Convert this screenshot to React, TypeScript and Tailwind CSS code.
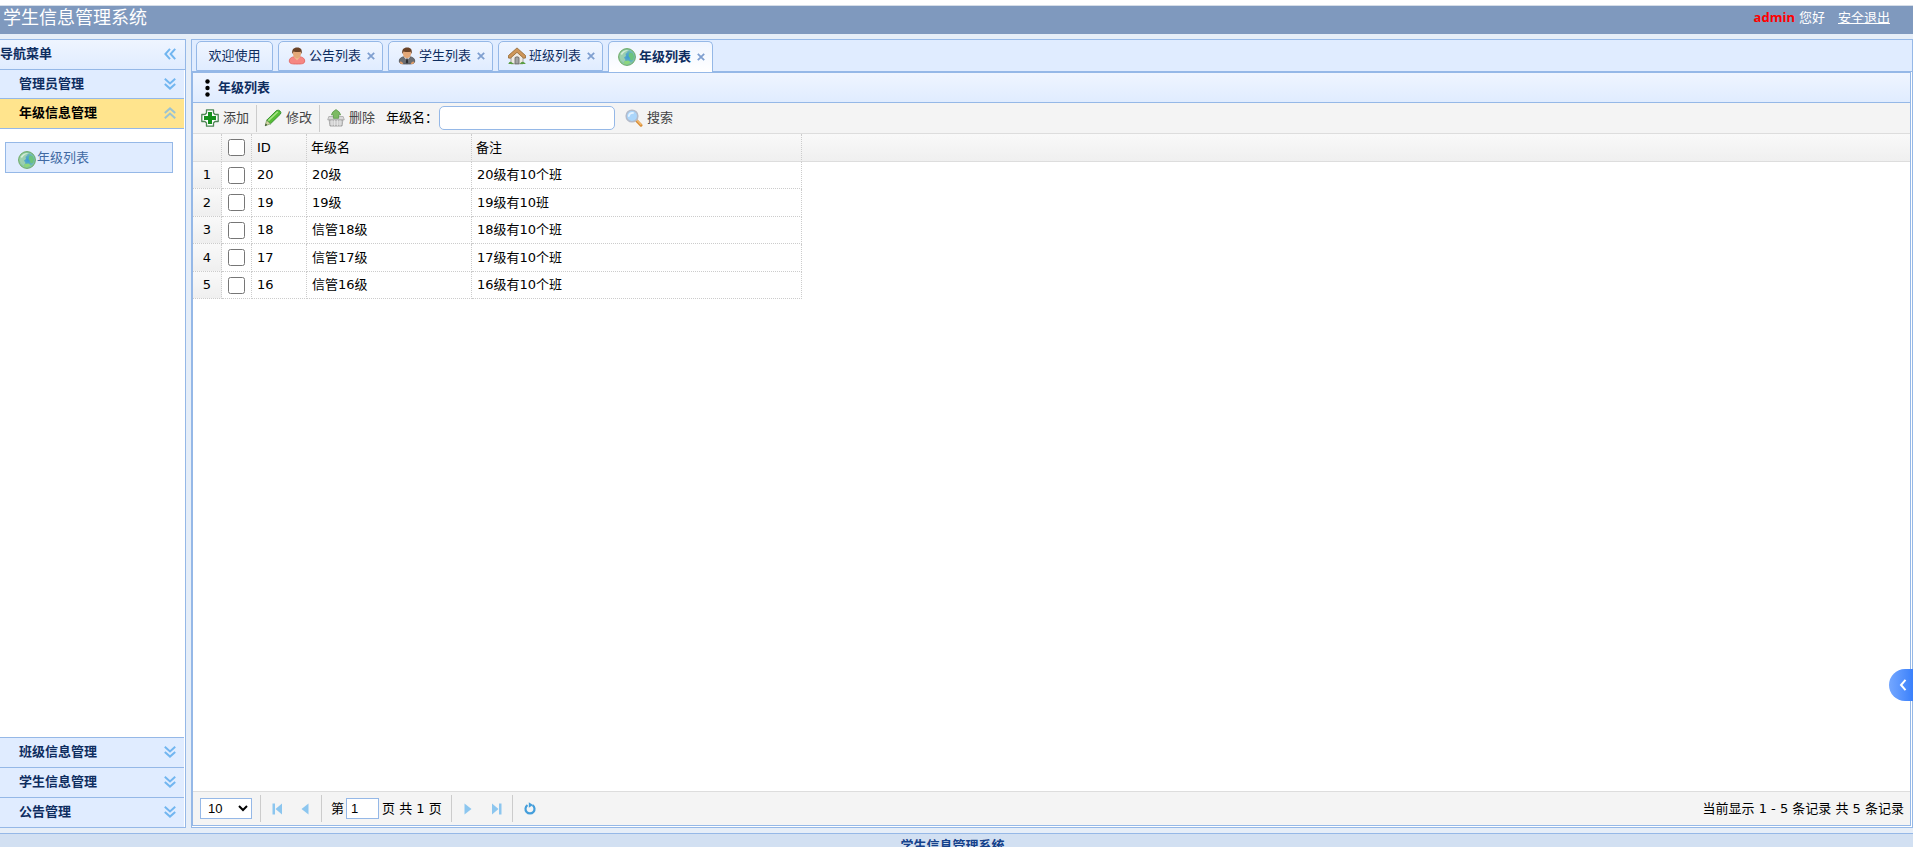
import type { ReactNode } from "react";

type IconProps = { className?: string };

const Chevrons = ({ className = "" }: IconProps) => (
  <svg viewBox="0 0 12 12" className={"size-3 shrink-0 " + className} fill="none" stroke="#72b6f0" strokeWidth="2" aria-hidden="true">
    <path d="M.8 .8 6 5.4 11.2 .8M.8 6 6 10.6 11.2 6" />
  </svg>
);

const Globe = () => (
  <svg viewBox="0 0 18 18" className="size-[18px] shrink-0" aria-hidden="true">
    <defs>
      <radialGradient id="globe" cx=".55" cy=".5" r=".55">
        <stop offset="0" stopColor="#3f9ad6" />
        <stop offset=".55" stopColor="#62b0c0" />
        <stop offset="1" stopColor="#9fd596" />
      </radialGradient>
    </defs>
    <circle cx="9" cy="9" r="8.4" fill="url(#globe)" stroke="#6aa866" strokeWidth="1" />
    <path d="M1.800 7C3 3.500 6 1.600 9.500 2L9.500 4 7.500 6 8 8 6 9.500 7.500 12 6 14.500C3 13.500 1.300 10 1.800 7Z" fill="#a4d4ae" opacity=".85" />
    <path d="M11.500 4.500 14.500 5 16 8.500 15 12 12.500 12.500 12 10 10.500 8Z" fill="#6cc47c" />
    <path d="M6.500 13 10.500 12.500 13 14.500Q9.500 17 6 15.800Z" fill="#8ed67c" />
    <path d="M2.500 6Q5.500 1.200 11.500 2Q6 3 4 7Z" fill="#e2f4e0" opacity=".8" />
  </svg>
);

const Person = ({ dark = false }: { dark?: boolean }) => (
  <svg viewBox="0 0 18 18" className="size-[18px] shrink-0" aria-hidden="true">
    <path d="M1.300 14C1.300 11 4 9.500 9 9.500S16.700 11 16.700 14C16.700 17 13.500 17 9 17S1.300 17 1.300 14Z" fill={dark ? "#6b6e73" : "#f68783"} stroke={dark ? "#4c4e52" : "#e0605c"} strokeWidth=".8" />
    <path d="M5.500 9.500 9 13.500 12.500 9.500Z" fill={dark ? "#dfe2e6" : "#eeb98e"} />
    {dark && <path d="M8.300 11.500H9.700L10.200 15.500 9 16.500 7.800 15.500Z" fill="#2c2d30" />}
    {dark && <path d="M1.600 15.500Q2.500 13.500 4.500 15.500T3 16.900ZM16.400 15.500Q15.500 13.500 13.500 15.500T15 16.900Z" fill="#dd9b66" />}
    <ellipse cx="9" cy="6.500" rx="4.100" ry="4.700" fill="#e4a878" />
    <path d="M4.300 7C3.600 2.500 5.500 .4 9.200 .4S14.400 2.500 13.700 7L12.600 4.800Q9 5.400 5.600 4.500Z" fill="#6b4327" />
  </svg>
);

const House = () => (
  <svg viewBox="0 0 18 18" className="size-[18px] shrink-0" aria-hidden="true">
    <path d="M3 9 9 3.500 15 9V16.800H3Z" fill="#eeeae4" stroke="#99938c" strokeWidth=".8" />
    <path d="M9 .9 .4 8.600V11L2.400 11.200 9 5.300 15.600 11.200 17.600 11V8.600Z" fill="#ce965a" stroke="#91642f" strokeWidth=".8" strokeLinejoin="round" />
    <path d="M7 10.500Q9 9 11 10.500V16.800H7Z" fill="#a2a2a2" stroke="#666" strokeWidth=".8" />
    <path d="M.3 17Q1.500 13.500 4 15.500T6.200 17ZM11.800 17Q13.500 14 15.500 15T17.700 17Z" fill="#5a9d43" />
  </svg>
);

const AddIcon = () => (
  <svg viewBox="0 0 18 18" className="size-[18px] shrink-0" aria-hidden="true">
    <path d="M5.500 .8H12.500V4L14 5.500H17.200V12.500H14L12.500 14V17.200H5.500V14L4 12.500H.8V5.500H4L5.500 4Z" fill="#fff" stroke="#4c8654" strokeWidth="1.300" strokeLinejoin="round" />
    <path d="M7 3H11V7H15V11H11V15H7V11H3V7H7Z" fill="#15901c" />
  </svg>
);

const PencilIcon = () => (
  <svg viewBox="0 0 18 18" className="size-[18px] shrink-0" aria-hidden="true">
    <path d="M12.500 1.500Q14.500 .6 16 2T16.500 5L6.500 14.800 2.600 11.300Z" fill="#57bd36" stroke="#2f8a2b" strokeWidth=".9" />
    <path d="M4.300 11.600 13.800 2.700" stroke="#a8e588" strokeWidth="1.500" />
    <path d="M2.600 11.300 6.500 14.800 1.200 16.800Z" fill="#d5d6a6" stroke="#5c8844" strokeWidth=".6" />
    <path d="M1 16.900 3.200 16.100 1.800 14.600Z" fill="#2c4426" />
  </svg>
);

const BasketIcon = () => (
  <svg viewBox="0 0 18 18" className="size-[18px] shrink-0" aria-hidden="true">
    <path d="M2 10H16L15 17H3Z" fill="#bdbdbd" stroke="#949494" strokeWidth=".8" />
    <path d="M1.800 7.500H16.200L17.300 10.800H.7Z" fill="#dadada" stroke="#a0a0a0" strokeWidth=".7" />
    <path d="M5 11V17M7.600 11V17M10.400 11V17M13 11V17M2.500 13H15.500M2.800 15H15.200" stroke="#f0f0f0" strokeWidth=".7" />
    <path d="M9 .6Q12.800 2.500 13.600 5.800H11.600V9.300H6.400V5.800H4.400Q5.200 2.500 9 .6Z" fill="#7dbb63" stroke="#5c9a4a" strokeWidth=".8" />
  </svg>
);

const SearchIcon = () => (
  <svg viewBox="0 0 18 18" className="size-[18px] shrink-0" aria-hidden="true">
    <path d="M11.500 11.500 16 16.200" stroke="#d98d35" strokeWidth="3" strokeLinecap="round" />
    <path d="M12 11.300 16 15.500" stroke="#f6bd72" strokeWidth="1.200" strokeLinecap="round" />
    <circle cx="7" cy="7" r="5.800" fill="#abd6fb" stroke="#b4bccb" strokeWidth="1.600" />
    <path d="M3.800 7Q4.300 3.900 8 3.900" stroke="#e5f3ff" strokeWidth="1.800" fill="none" strokeLinecap="round" />
  </svg>
);

const FirstIcon = ({ className = "" }: IconProps) => (
  <svg viewBox="0 0 11 12" className={"h-3 w-[11px] " + className} fill="#8cc6ef" aria-hidden="true">
    <path d="M.5 .5H3V11.500H.5ZM10 .5V11.500L3.500 6Z" />
  </svg>
);

const PrevIcon = ({ className = "" }: IconProps) => (
  <svg viewBox="0 0 8 12" className={"h-3 w-2 " + className} fill="#8cc6ef" aria-hidden="true">
    <path d="M7.500 .5V11.500L.5 6Z" />
  </svg>
);

const RefreshIcon = () => (
  <svg viewBox="0 0 12 13" className="h-[13px] w-3" aria-hidden="true">
    <path d="M8.500 3.200A4.500 4.500 0 1 1 3.500 3.200" fill="none" stroke="#449edb" strokeWidth="2.200" />
    <path d="M4.800 .2 9 3 4.800 5.800Z" fill="#449edb" />
  </svg>
);

const Splitter = () => <span className="h-[27px] w-px shrink-0 bg-[#ccc]" />;

function MenuHeader({ title, open = false }: { title: string; open?: boolean }) {
  return (
    <button
      type="button"
      aria-expanded={open}
      className={
        "flex shrink-0 items-center justify-between border-[#95b8e7] pr-2 pb-px pl-[19px] font-bold " +
        (open ? "bg-[#ffe48d] text-black" : "bg-[#e0ecff] text-[#0e2d5f]")
      }
    >
      {title}
      <Chevrons className={open ? "rotate-180 opacity-70" : ""} />
    </button>
  );
}

function Tab({ title, icon, active = false }: { title: string; icon?: ReactNode; active?: boolean }) {
  return (
    <div
      className={
        "flex h-[30px] items-center rounded-t-[5px] border border-[#95b8e7] text-[#0e2d5f] " +
        (icon ? "w-[105px] pr-[7px] pl-[9px] " : "w-[77px] justify-center ") +
        (active
          ? "-mb-px h-[31px] border-b-0 bg-linear-to-b from-[#eff5ff] to-white pb-px font-bold"
          : "bg-linear-to-b from-[#eff5ff] to-[#e0ecff]")
      }
    >
      <button type="button" className="flex items-center gap-[3px] whitespace-nowrap">
        {icon}
        {title}
      </button>
      {icon && (
        <button type="button" aria-label={"关闭" + title} className="ml-auto size-[8px]">
          <svg viewBox="0 0 8 8" className="size-2" stroke="#7f9fd0" strokeWidth="1.800" aria-hidden="true">
            <path d="M.8 .8 7.200 7.200M7.200 .8 .8 7.200" />
          </svg>
        </button>
      )}
    </div>
  );
}

const rows = [
  { id: 20, name: "20级", remark: "20级有10个班" },
  { id: 19, name: "19级", remark: "19级有10班" },
  { id: 18, name: "信管18级", remark: "18级有10个班" },
  { id: 17, name: "信管17级", remark: "17级有10个班" },
  { id: 16, name: "信管16级", remark: "16级有10个班" },
];

const headCell = "border-r border-b border-r-[#ccc] border-b-[#ddd] [border-right-style:dotted] p-0 font-normal";
const bodyCell = "border-r border-b border-dotted border-[#ccc] p-0";
const gridGray = "bg-linear-to-b from-[#f9f9f9] to-[#efefef]";

export default function App() {
  return (
    <div className="flex h-screen flex-col overflow-hidden bg-[#e6eef8] pt-[5px] font-['DejaVu_Sans','Noto_Sans_CJK_SC',sans-serif] text-[13px] leading-5 text-black shadow-[inset_0_5px_0_white]">
      <header className="flex h-[29px] shrink-0 items-start justify-between border-t border-[#d5dde8] bg-[#7f99be] pr-[23px] pl-[3px] text-white">
        <h1 className="text-[18px] leading-[23px]">学生信息管理系统</h1>
        <div className="flex items-center pt-px leading-[21px]">
          <b className="font-['Open_Sans','Noto_Sans_CJK_SC',sans-serif] text-[#f00]">admin</b>
          <span className="ml-1">您好</span>
          <a href="#logout" className="ml-[13px] underline">安全退出</a>
        </div>
      </header>

      <div className="flex min-h-0 flex-1 gap-[5px] py-[5px]">
        <aside className="flex w-[186px] shrink-0 flex-col border-y border-r border-[#95b8e7] bg-white">
          <div className="flex h-[30px] shrink-0 items-center justify-between border-b border-[#95b8e7] bg-linear-to-b from-[#eff5ff] to-[#e0ecff] pr-[9px] pb-px font-bold text-[#0e2d5f]">
            导航菜单
            <button type="button" aria-label="收起菜单">
              <Chevrons className="rotate-90" />
            </button>
          </div>
          <nav className="mr-px flex min-h-0 flex-1 flex-col">
            <div className="flex flex-col [&>button]:border-b [&>button]:first:h-[29px] [&>button]:last:h-[30px]">
              <MenuHeader title="管理员管理" />
              <MenuHeader title="年级信息管理" open />
            </div>
            <div className="flex-1 pt-[13px] pr-[11px] pl-[5px]">
              <a href="#grades" className="flex h-[31px] items-center border border-[#95b8e7] bg-[#e0ecff] pl-3 text-[#416aa3]">
                <span className="pt-1"><Globe /></span>
                <span className="ml-px">年级列表</span>
              </a>
            </div>
            <div className="flex flex-col [&>button]:h-[30px] [&>button]:border-t">
              <MenuHeader title="班级信息管理" />
              <MenuHeader title="学生信息管理" />
              <MenuHeader title="公告管理" />
            </div>
          </nav>
        </aside>

        <main className="flex min-w-0 flex-1 flex-col border border-[#95b8e7] bg-white pb-px">
          <div className="flex h-8 shrink-0 items-end gap-[5px] border-b border-[#95b8e7] bg-[#e0ecff] pl-1">
            <Tab title="欢迎使用" />
            <Tab title="公告列表" icon={<Person />} />
            <Tab title="学生列表" icon={<Person dark />} />
            <Tab title="班级列表" icon={<House />} />
            <Tab title="年级列表" icon={<Globe />} active />
          </div>

          <section className="mr-px flex min-h-0 flex-1 flex-col border border-[#95b8e7]">
            <div className="flex h-[30px] shrink-0 items-center border-b border-[#95b8e7] bg-linear-to-b from-[#eff5ff] to-[#e0ecff] pl-3 font-bold text-[#0e2d5f]">
              <svg viewBox="0 0 5 18" className="h-[18px] w-[5px]" aria-hidden="true">
                <circle cx="2.500" cy="2.500" r="2.200" /><circle cx="2.500" cy="9" r="2.200" /><circle cx="2.500" cy="15.500" r="2.200" />
              </svg>
              <h2 className="ml-2">年级列表</h2>
            </div>

            <div className="flex h-[31px] shrink-0 items-center border-b border-[#ddd] bg-[#f4f4f4] pl-2 text-[#444]">
              <button type="button" className="flex items-center gap-1"><AddIcon />添加</button>
              <span className="mx-[7px] flex"><Splitter /></span>
              <button type="button" className="flex items-center gap-1"><PencilIcon />修改</button>
              <span className="mx-[7px] flex"><Splitter /></span>
              <button type="button" className="flex items-center gap-1"><BasketIcon />删除</button>
              <label htmlFor="grade" className="ml-[11px] text-black">年级名：</label>
              <input id="grade" type="text" className="ml-px h-6 w-44 rounded-[5px] border border-[#95b8e7] bg-white px-1 outline-none" />
              <button type="button" className="ml-[10px] flex items-center gap-1"><SearchIcon />搜索</button>
            </div>

            <div className="min-h-0 flex-1 overflow-hidden">
              <table className="w-full table-fixed border-separate border-spacing-0 text-left">
                <colgroup>
                  <col className="w-[29px]" />
                  <col className="w-[30px]" />
                  <col className="w-[55px]" />
                  <col className="w-[165px]" />
                  <col className="w-[330px]" />
                  <col />
                </colgroup>
                <thead className={gridGray}>
                  <tr className="h-7">
                    <th className={headCell} />
                    <th className={headCell}>
                      <input type="checkbox" aria-label="全选" className="mx-auto block size-[17px]" />
                    </th>
                    <th className={headCell}><span className="pl-[5px]">ID</span></th>
                    <th className={headCell}><span className="pl-1">年级名</span></th>
                    <th className={headCell}><span className="pl-1">备注</span></th>
                    <th className="border-b border-[#ddd] p-0" />
                  </tr>
                </thead>
                <tbody>
                  {rows.map((r, i) => (
                    <tr key={r.id} className="h-[27px] even:h-7">
                      <td className={bodyCell + " text-center " + gridGray}>{i + 1}</td>
                      <td className={bodyCell}>
                        <input type="checkbox" aria-label={"选择 " + r.name} className="mx-auto block size-[17px]" />
                      </td>
                      <td className={bodyCell}><span className="pl-[5px]">{r.id}</span></td>
                      <td className={bodyCell}><span className="pl-[5px]">{r.name}</span></td>
                      <td className={bodyCell}><span className="pl-[5px]">{r.remark}</span></td>
                    </tr>
                  ))}
                </tbody>
              </table>
            </div>

            <div className="flex h-[34px] shrink-0 items-center border-t border-[#ddd] bg-[#f4f4f4] pr-[6px] pl-[7px]">
              <select aria-label="每页记录数" defaultValue="10" className="h-[21px] w-[52px] border border-[#95b8e7] bg-white pl-[3px] font-['Liberation_Sans',sans-serif]">
                <option>10</option>
                <option>20</option>
                <option>50</option>
              </select>
              <span className="ml-2 flex"><Splitter /></span>
              <button type="button" aria-label="首页" className="ml-[11px]"><FirstIcon /></button>
              <button type="button" aria-label="上一页" className="ml-[18px]"><PrevIcon /></button>
              <span className="ml-3 flex"><Splitter /></span>
              <label htmlFor="page" className="ml-[9px]">第</label>
              <input id="page" type="text" defaultValue="1" className="ml-[2px] h-[21px] w-[33px] border border-[#95b8e7] bg-white px-1 font-['Liberation_Sans',sans-serif] outline-none" />
              <span className="ml-[3px]">页 共 1 页</span>
              <span className="ml-[9px] flex"><Splitter /></span>
              <button type="button" aria-label="下一页" className="ml-3"><PrevIcon className="rotate-180" /></button>
              <button type="button" aria-label="末页" className="ml-[19px]"><FirstIcon className="rotate-180" /></button>
              <span className="ml-[10px] flex"><Splitter /></span>
              <button type="button" aria-label="刷新" className="ml-[11px]"><RefreshIcon /></button>
              <span className="ml-auto">当前显示 1 - 5 条记录 共 5 条记录</span>
            </div>
          </section>
        </main>
      </div>

      <footer className="h-[14px] shrink-0 border-t border-[#95b8e7] bg-[#d2e0f2] pt-[2px] pr-2 text-center font-bold text-[#15428b]">
        学生信息管理系统
      </footer>

      <button
        type="button"
        aria-label="展开侧栏"
        className="absolute right-0 bottom-[146px] flex h-8 w-6 items-center justify-center rounded-l-full bg-linear-to-r from-[#74a7ff] to-[#3a80fb] pl-1"
      >
        <svg viewBox="0 0 8 12" className="h-3 w-2" fill="none" stroke="white" strokeWidth="2" aria-hidden="true">
          <path d="M6.500 .8 2 6 6.500 11.200" />
        </svg>
      </button>
    </div>
  );
}
